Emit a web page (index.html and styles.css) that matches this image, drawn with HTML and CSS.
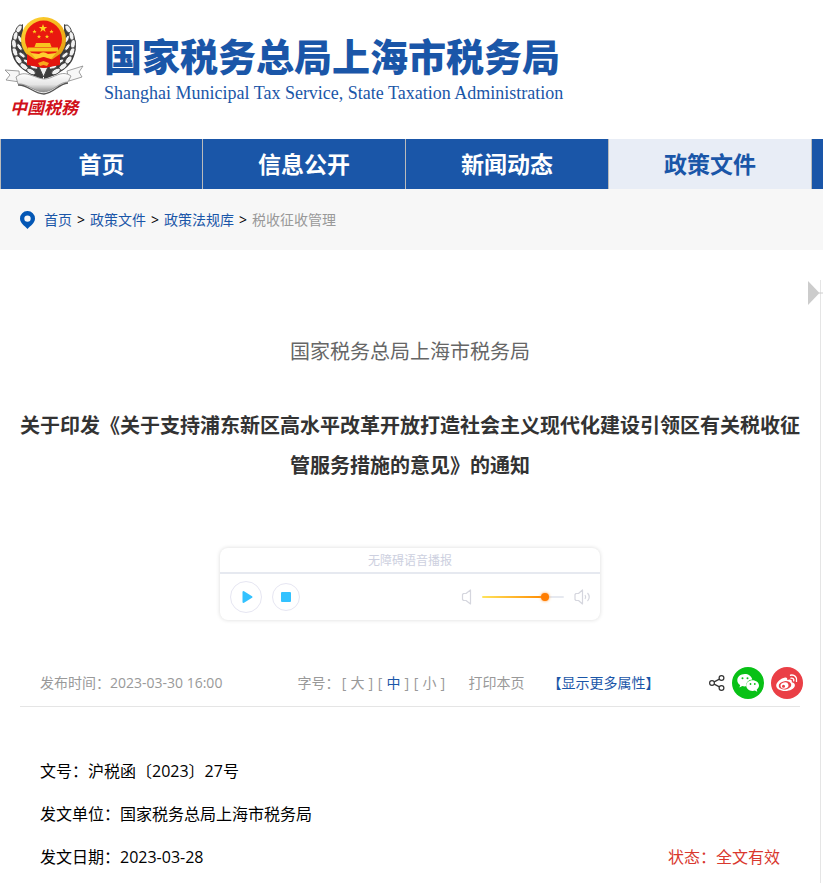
FILE: index.html
```html
<!DOCTYPE html>
<html lang="zh-CN">
<head>
    <meta charset="utf-8">
    <title>国家税务总局上海市税务局</title>
    <link rel="stylesheet" href="styles.css">
</head>
<body>
    <header class="header">
        <svg class="logo" width="100" height="120" viewBox="0 0 100 120">
            <defs>
                <linearGradient id="silver" x1="0" y1="0" x2="0" y2="1">
                    <stop offset="0" stop-color="#ffffff"/>
                    <stop offset="0.6" stop-color="#e4e4e4"/>
                    <stop offset="1" stop-color="#8a8a8a"/>
                </linearGradient>
                <linearGradient id="gold" x1="0" y1="0" x2="1" y2="1">
                    <stop offset="0" stop-color="#ffd83a"/>
                    <stop offset="0.5" stop-color="#f4b81c"/>
                    <stop offset="1" stop-color="#e39a10"/>
                </linearGradient>
                <!-- 半边麦穗 -->
                <g id="wheat">
                    <path d="M23 14C10 22 8 38 15 51c5 8 15 14 28 18V53C30 52 22 40 23 14z" fill="#3c3c3c"/>
                    <g fill="#f2f2f2" stroke="#333" stroke-width="0.800">
                        <ellipse cx="19" cy="19" rx="2.400" ry="4.500" transform="rotate(30 19 19)"/>
                        <ellipse cx="15.500" cy="26" rx="2.400" ry="4.500" transform="rotate(12 15.500 26)"/>
                        <ellipse cx="14" cy="34" rx="2.400" ry="4.500" transform="rotate(-5 14 34)"/>
                        <ellipse cx="15" cy="42" rx="2.500" ry="4.500" transform="rotate(-20 15 42)"/>
                        <ellipse cx="18.500" cy="50" rx="2.500" ry="4.800" transform="rotate(-35 18.500 50)"/>
                        <ellipse cx="24" cy="56.500" rx="2.500" ry="4.800" transform="rotate(-52 24 56.500)"/>
                        <ellipse cx="31" cy="61.500" rx="2.500" ry="4.800" transform="rotate(-62 31 61.500)"/>
                        <ellipse cx="20" cy="29" rx="1.800" ry="4" transform="rotate(-25 20 29)"/>
                        <ellipse cx="19.500" cy="37" rx="1.800" ry="4" transform="rotate(-35 19.500 37)"/>
                        <ellipse cx="22" cy="45" rx="1.800" ry="4" transform="rotate(-50 22 45)"/>
                        <ellipse cx="27" cy="51.500" rx="1.800" ry="4" transform="rotate(-65 27 51.500)"/>
                        <ellipse cx="34" cy="57" rx="1.800" ry="4" transform="rotate(-75 34 57)"/>
                    </g>
                </g>
            </defs>
            <use href="#wheat"/>
            <use href="#wheat" transform="translate(87 0) scale(-1 1)"/>
            <path d="M39 57L43.500 67L48 57Z" fill="#eee" stroke="#444"/>
            <!-- 国徽 -->
            <path d="M28 40h31l1 14-16 4-17-4z" fill="#df140d"/>
            <ellipse cx="43.500" cy="29.500" rx="22.500" ry="22.500" fill="url(#gold)"/>
            <ellipse cx="43.500" cy="29" rx="18.500" ry="18.500" fill="#e9190f"/>
            <path d="M43 14l1.100 3h3.100l-2.500 1.900.9 3-2.600-1.800-2.600 1.800.9-3-2.500-1.900h3.100z" fill="#ffd21f"/>
            <g fill="#ffcf20">
                <path id="star" d="M34.500 19.500l.6 1.400h1.500l-1.200 1 .5 1.500-1.400-.9-1.400.9.5-1.500-1.200-1h1.500z"/>
                <use href="#star" x="17"/>
                <use href="#star" x="4.500" y="5"/>
                <use href="#star" x="12.500" y="5"/>
            </g>
            <path d="M36 33h14l1.500 4H34.500zM28 37.500h30v4H28z" fill="#f8c51f"/>
            <path d="M31 43l8 1q4-3.500 9 0l8-1-5 6-7-2-8 2z" fill="#ffcf2e"/>
            <path d="M27 44l8 5.500 8.500-2.500 8.500 2.500 8-5.500v11l-16 3-17-3z" fill="#e3150e"/>
            <path d="M38 53l5.500-2 5.500 2-2 3-3.500-1-3.500 1z" fill="#f9a81c"/>
            <!-- 飘带 -->
            <path d="M19 61L5 60l5 5-4 5 14 2zM67 61l16-5-4 6 3 5-13 4z" fill="#f7f7f7" stroke="#888" stroke-width="0.800"/>
            <path d="M16 67c9-8 17 1 28 2 10 0 17-10 27-3l-3 6c-9 0-14 9-24 10-10 0-17-9-26-8z" fill="url(#silver)" stroke="#8a8a8a" stroke-width="0.800"/>
            <path d="M18 75c9-1 16 9 26 9 10-1 14-10 24-11" fill="none" stroke="#555" stroke-width="1.400"/>
            <text class="logo-text" x="10" y="104">中國税務</text>
        </svg>
        <div class="site-name">
            <div class="name-cn">国家税务总局上海市税务局</div>
            <div class="name-en">Shanghai Municipal Tax Service, State Taxation Administration</div>
        </div>
    </header>

    <nav class="nav">
        <a href="#">首页</a>
        <a href="#">信息公开</a>
        <a href="#">新闻动态</a>
        <a href="#" class="active">政策文件</a>
        <a href="#" aria-label="更多"></a>
    </nav>

    <div class="crumbs">
        <svg class="pin" width="15" height="18" viewBox="0 0 15 18">
            <path d="M7.500 0A7.400 7.400 0 0 0 0 7.400C0 12 4.500 14.500 7.500 18 10.500 14.500 15 12 15 7.400A7.400 7.400 0 0 0 7.500 0zm0 4.400a3.200 3.200 0 1 1 0 6.400 3.200 3.200 0 0 1 0-6.400z" fill="#0457b5"/>
        </svg>
        <a href="#">首页</a>
        <span>&gt;</span>
        <a href="#">政策文件</a>
        <span>&gt;</span>
        <a href="#">政策法规库</a>
        <span>&gt;</span>
        <a href="#" class="current">税收征收管理</a>
    </div>

    <main class="article">
        <svg class="side-arrow" width="15" height="24" viewBox="0 0 15 24">
            <path d="M0 0l11.500 12L0 24z" fill="#ccc"/>
            <path d="M11 12h4" stroke="#ccc"/>
        </svg>

        <div class="source">国家税务总局上海市税务局</div>
        <h1 class="title">关于印发《关于支持浦东新区高水平改革开放打造社会主义现代化建设引领区有关税收征管服务措施的意见》的通知</h1>

        <section class="player">
            <div class="player-title">无障碍语音播报</div>
            <div class="player-bar">
                <button type="button" class="round play" aria-label="播放">
                    <svg width="12" height="14" viewBox="0 0 12 14"><path d="M2.500 2v10L10.500 7z" fill="#33c2ff" stroke="#33c2ff" stroke-width="2" stroke-linejoin="round"/></svg>
                </button>
                <button type="button" class="round stop" aria-label="停止">
                    <svg width="10" height="10" viewBox="0 0 10 10"><rect width="10" height="10" rx="1" fill="#33c2ff"/></svg>
                </button>
                <div class="volume">
                    <svg width="11" height="16" viewBox="0 0 11 16"><path d="M9.500 1v14L5 11.500H2.500l-1-1v-5l1-1H5z" fill="none" stroke="#d5d6de" stroke-width="1.200" stroke-linejoin="round"/></svg>
                    <input type="range" min="0" max="100" value="80" aria-label="音量">
                    <svg width="18" height="16" viewBox="0 0 18 16"><path d="M8.500 1v14L4.500 11.500H2l-1-1v-5l1-1h2.500zM11 6q1.500 2 0 4M13.500 4q3.500 4 0 8" fill="none" stroke="#d5d6de" stroke-width="1.200" stroke-linejoin="round"/></svg>
                </div>
            </div>
        </section>

        <div class="meta">
            <span class="date">发布时间：2023-03-30 16:00</span>
            <div class="sizes">
                <span>字号：</span>
                <span class="size">[<button type="button">大</button>]</span>
                <span class="size">[<button type="button" class="on">中</button>]</span>
                <span class="size">[<button type="button">小</button>]</span>
            </div>
            <button type="button" class="print">打印本页</button>
            <button type="button" class="more">【显示更多属性】</button>
            <div class="share">
                <svg class="share-icon" width="16" height="16" viewBox="0 0 16 16">
                    <g fill="none" stroke="#333" stroke-width="1.200">
                        <circle cx="3" cy="8" r="2.400"/>
                        <circle cx="12.500" cy="3" r="2.400"/>
                        <circle cx="12.500" cy="13" r="2.400"/>
                        <path d="M5.200 6.900l5.200-2.800M5.200 9.100l5.200 2.800"/>
                    </g>
                </svg>
                <a href="#" aria-label="微信">
                    <svg width="32" height="32" viewBox="0 0 32 32">
                        <circle cx="16" cy="16" r="16" fill="#08c116"/>
                        <path d="M12.800 7C8.500 7 5.300 9.800 5.300 13.200c0 2 1.100 3.700 2.900 4.900l-.8 2.500 2.900-1.500c1.300.4 2.600.4 4 .2C13.500 15.500 17 12.500 20.300 12.500 19.500 9 16.400 7 12.800 7z" fill="#fff"/>
                        <path d="M20.500 13.300c-3.700 0-6.300 2.400-6.300 5.300 0 3.100 3 5.500 6.500 5.300.8 0 1.500-.2 2.200-.4l2.400 1.300-.6-2.100c1.300-1 2.300-2.400 2.300-4.100 0-2.900-2.900-5.300-6.500-5.300z" fill="#fff"/>
                        <g fill="#08c116"><circle cx="10.500" cy="11.300" r="1"/><circle cx="15.500" cy="11.300" r="1"/><circle cx="18.500" cy="17" r=".9"/><circle cx="22.800" cy="17" r=".9"/></g>
                    </svg>
                </a>
                <a href="#" aria-label="微博">
                    <svg width="32" height="32" viewBox="0 0 32 32">
                        <circle cx="16" cy="16" r="16" fill="#ea3f46"/>
                        <path d="M14 10.500c1.700-.4 2.700.7 2.200 2.600 2.900-1.100 5.300-.5 4.600 2.200 2.300.6 3.300 1.700 3.100 3.200-.4 3.300-5.100 5.500-9.800 5.500-5 0-8.900-2.300-8.900-5.500 0-3.300 4.800-7.400 8.800-8z" fill="#fff"/>
                        <ellipse cx="14" cy="18.300" rx="6.300" ry="4.200" transform="rotate(-8 14 18.300)" fill="#ea3f46"/>
                        <ellipse cx="13.500" cy="18.500" rx="4" ry="3.200" transform="rotate(-15 13.500 18.500)" fill="#fff"/>
                        <circle cx="12.500" cy="19.200" r="1.500" fill="#ea3f46"/>
                        <path d="M19.500 8.200c4.200-.8 7 2.300 6 6.200M20 11.200c2-.3 3.200 1 2.700 2.700" fill="none" stroke="#fff" stroke-width="1.400" stroke-linecap="round"/>
                    </svg>
                </a>
            </div>
        </div>

        <div class="info">
            <div class="row">文号：沪税函〔2023〕27号</div>
            <div class="row">发文单位：国家税务总局上海市税务局</div>
            <div class="row"><span>发文日期：2023-03-28</span><span class="status">状态：全文有效</span></div>
        </div>
    </main>
</body>
</html>
```
FILE: styles.css
```css
* {
    box-sizing: border-box;
}
body {
    margin: 0;
    background: #fff;
    color: #000;
    font-family: "Open Sans", "Noto Sans CJK SC", sans-serif;
    font-size: 14px;
    overflow-x: hidden;
}
a {
    color: #1a56a8;
    text-decoration: none;
}
button {
    padding: 0;
    border: 0;
    background: none;
    color: inherit;
    font: inherit;
    cursor: pointer;
}
svg {
    display: block;
}

/* 页头 */
.header {
    display: flex;
    gap: 4px;
    padding: 10px 0 9px;
}
.logo {
    flex: none;
}
.logo-text {
    fill: #d0111b;
    font-family: "Noto Sans CJK SC", sans-serif;
    font-size: 17px;
    font-style: italic;
    font-weight: bold;
}
.site-name {
    padding-top: 22px;
    color: #1a56a8;
    white-space: nowrap;
}
.name-cn {
    font-size: 38px;
    font-weight: 900;
    line-height: 48px;
}
.name-en {
    font-family: "Liberation Serif", serif;
    font-size: 18px;
    line-height: 26px;
}

/* 导航 */
.nav {
    display: flex;
    height: 50px;
    overflow: hidden;
}
.nav a {
    flex: 0 0 203px;
    border-right: 1px solid #bbb;
    background: #1a56a8;
    color: #fff;
    font-size: 23px;
    font-weight: bold;
    line-height: 50px;
    text-align: center;
}
.nav a:first-child {
    border-left: 1px solid #bbb;
}
.nav a.active {
    background: #e8edf6;
    color: #1a56a8;
}

.crumbs {
    display: flex;
    align-items: center;
    gap: 5px;
    height: 61px;
    padding: 0 20px;
    background: #f7f7f7;
    line-height: 18px;
}
.pin {
    margin-right: 4px;
}
.crumbs .current {
    color: #999;
}

/* 正文 */
.article {
    position: relative;
    margin: 30px 2px 0 0;
    padding: 52px 20px 40px;
    border-right: 1px solid #e5e5e5;
}
.side-arrow {
    position: absolute;
    top: 1px;
    right: -3px;
}
.source {
    color: #666;
    font-size: 20px;
    line-height: 40px;
    text-align: center;
}
.title {
    margin: 34px 0 62px;
    color: #333;
    font-size: 20px;
    line-height: 40px;
    text-align: center;
}

/* 语音播报 */
.player {
    width: 380px;
    margin: 0 auto;
    border-radius: 8px;
    box-shadow: 0 0 4px rgba(0, 0, 0, 0.15);
}
.player-title {
    padding-top: 2px;
    border-bottom: 2px solid #e6e9f0;
    color: #cdd0e0;
    font-size: 12px;
    line-height: 22px;
    text-align: center;
}
.player-bar {
    display: flex;
    align-items: center;
    gap: 10px;
    height: 46px;
    padding: 0 8px 0 10px;
}
.round {
    display: flex;
    align-items: center;
    justify-content: center;
    border: 1px solid #e6e6f2;
    border-radius: 50%;
}
.play {
    width: 32px;
    height: 32px;
    padding-left: 2px;
}
.stop {
    width: 28px;
    height: 28px;
}
.volume {
    display: flex;
    align-items: center;
    gap: 10px;
    margin-left: auto;
}
.volume input {
    width: 82px;
    height: 10px;
    margin: 0;
    appearance: none;
    background: transparent;
}
.volume input::-webkit-slider-runnable-track {
    height: 2px;
    border-radius: 1px;
    background: linear-gradient(to right, #ffe45c, #ff8a00 77%, #e6e9f0 77%);
}
.volume input::-webkit-slider-thumb {
    width: 8px;
    height: 8px;
    margin-top: -3px;
    appearance: none;
    border-radius: 50%;
    background: #ff7d00;
    box-shadow: 0 0 3px #ff9a3c;
}

.meta {
    display: flex;
    align-items: center;
    height: 47px;
    margin-top: 40px;
    padding-left: 20px;
    border-bottom: 1px solid #e5e5e5;
    color: #999;
    line-height: 18px;
    white-space: nowrap;
}
.sizes {
    display: flex;
    margin: 0 21px 0 75px;
}
.size {
    display: flex;
    justify-content: center;
    gap: 4px;
    width: 36px;
}
.on,
.more {
    color: #1a56a8;
}
.more {
    margin-left: 23px;
}
.share {
    display: flex;
    align-items: center;
    gap: 7px;
    margin: 0 -3px 0 auto;
}

.info {
    margin-top: 43px;
    padding: 0 20px;
    font-size: 16px;
    line-height: 43px;
}
.row {
    display: flex;
    justify-content: space-between;
}
.status {
    color: #d9382e;
}
```
